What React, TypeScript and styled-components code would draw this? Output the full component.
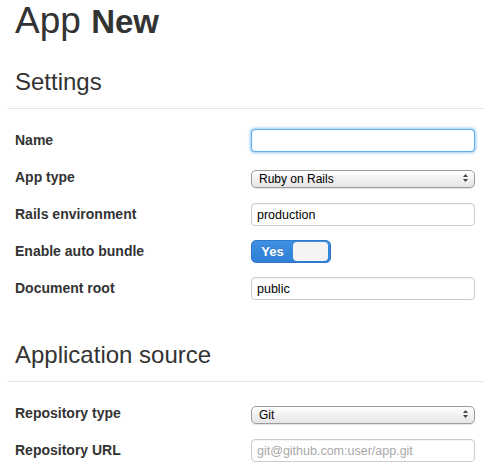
import React from "react";
import styled, { createGlobalStyle } from "styled-components";

const Global = createGlobalStyle`
  html, body { margin: 0; padding: 0; background: #fff; }
  body { font-family: "Liberation Sans", Arial, Helvetica, sans-serif; color: #333; }
`;

const Page = styled.div`
  padding-left: 7px;
  overflow: hidden;
`;

const Title = styled.h1`
  margin: 0;
  padding-left: 8px;
  font-size: 37px;
  line-height: 42px;
  height: 42px;
  font-weight: normal;
  color: #333;
  strong {
    font-size: 33px;
    line-height: 1;
    font-weight: bold;
  }
`;

const Section = styled.section<{ $top: number }>`
  margin-top: ${(p) => p.$top}px;
`;

const Legend = styled.h2`
  margin: 0;
  padding: 0 0 6px 8px;
  font-size: 24px;
  line-height: 40px;
  font-weight: normal;
  color: #333;
  border-bottom: 1px solid #e5e5e5;
`;

const Rows = styled.div`
  padding-top: 13px;
  display: flex;
  flex-direction: column;
`;

const Row = styled.div`
  display: grid;
  grid-template-columns: 236px 224px;
  align-items: center;
  height: 37px;
  padding-left: 8px;
`;

const Label = styled.label`
  font-size: 14px;
  font-weight: bold;
  color: #333;
  line-height: 37px;
`;

const TextInput = styled.input<{ $focus?: boolean }>`
  box-sizing: border-box;
  width: 224px;
  height: 23px;
  margin: 0;
  padding: 0 5px;
  border: 1px solid ${(p) => (p.$focus ? "rgba(82,168,236,0.9)" : "#ccc")};
  border-radius: 4px;
  font-family: "Liberation Sans", Arial, sans-serif;
  font-size: 12.5px;
  color: #000;
  background: #fff;
  outline: none;
  box-shadow: ${(p) =>
    p.$focus
      ? "0 0 3px 1px rgba(82,168,236,0.6), inset 0 0 1px rgba(82,168,236,0.5)"
      : "inset 0 1px 1px rgba(0,0,0,0.05)"};
  &::placeholder { color: #a8a8a8; }
`;

const SelectWrap = styled.div`
  position: relative;
  width: 224px;
  height: 18px;
`;

const Select = styled.select`
  box-sizing: border-box;
  appearance: none;
  -webkit-appearance: none;
  width: 224px;
  height: 18px;
  margin: 0;
  padding: 0 0 0 7px;
  border: 1px solid #9d9d9d;
  border-radius: 5px;
  background: linear-gradient(#ffffff, #f1f1f1 50%, #e6e6e6);
  box-shadow: 0 1px 1px rgba(0,0,0,0.12);
  font-family: "Liberation Sans", Arial, sans-serif;
  font-size: 12px;
  line-height: 16px;
  color: #000;
  outline: none;
`;

const Arrows = styled.svg`
  position: absolute;
  right: 7px;
  top: 5px;
  pointer-events: none;
`;

const Toggle = styled.div`
  box-sizing: border-box;
  width: 80px;
  height: 23px;
  border-radius: 5px;
  background: linear-gradient(#3f90e2, #2f7fd6);
  border: 1px solid #2d78c9;
  display: flex;
  align-items: center;
  padding: 1px 2px 1px 0;
`;

const ToggleText = styled.span`
  width: 41px;
  text-align: center;
  color: #fff;
  font-size: 13px;
  font-weight: bold;
  text-shadow: 0 -1px 0 rgba(0,0,0,0.15);
`;

const Knob = styled.span`
  flex: 1;
  height: 19px;
  border-radius: 4px;
  background: #f4f4f4;
`;

const SelectField = ({ value }: { value: string }) => (
  <SelectWrap>
    <Select defaultValue={value}>
      <option>{value}</option>
    </Select>
    <Arrows width="5" height="8" viewBox="0 0 5 8">
      <path d="M2.5 0 L5 3 L0 3 Z M0 5 L5 5 L2.5 8 Z" fill="#444" />
    </Arrows>
  </SelectWrap>
);

export default function App() {
  return (
    <Page>
      <Global />
      <Title>
        App <strong>New</strong>
      </Title>
      <Section $top={20}>
        <Legend>Settings</Legend>
        <Rows>
          <Row>
            <Label>Name</Label>
            <TextInput $focus />
          </Row>
          <Row>
            <Label>App type</Label>
            <SelectField value="Ruby on Rails" />
          </Row>
          <Row>
            <Label>Rails environment</Label>
            <TextInput defaultValue="production" />
          </Row>
          <Row>
            <Label>Enable auto bundle</Label>
            <Toggle>
              <ToggleText>Yes</ToggleText>
              <Knob />
            </Toggle>
          </Row>
          <Row>
            <Label>Document root</Label>
            <TextInput defaultValue="public" />
          </Row>
        </Rows>
      </Section>
      <Section $top={28}>
        <Legend>Application source</Legend>
        <Rows>
          <Row>
            <Label>Repository type</Label>
            <SelectField value="Git" />
          </Row>
          <Row>
            <Label>Repository URL</Label>
            <TextInput placeholder="git@github.com:user/app.git" />
          </Row>
        </Rows>
      </Section>
    </Page>
  );
}
